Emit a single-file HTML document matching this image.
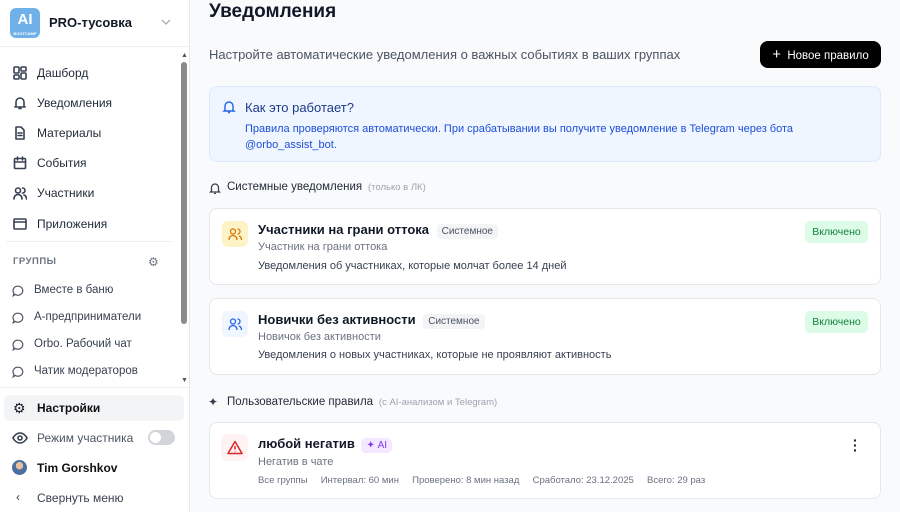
<!DOCTYPE html>
<html><head><meta charset="utf-8"><style>
*{box-sizing:border-box;margin:0;padding:0}
body{width:900px;height:512px;overflow:hidden;font-family:"Liberation Sans","Noto Sans CJK SC",sans-serif;background:#f9fafb;position:relative;color:#111827}
.a{position:absolute}
.sb{left:0;top:0;width:190px;height:512px;background:#fff;border-right:1px solid #e5e7eb}
.nav{font-size:12px;color:#1f2937}
.ic{stroke:#374151;fill:none;stroke-width:1.6;stroke-linecap:round;stroke-linejoin:round}
.grp{font-size:11.5px;color:#374151}
.card{left:209px;width:672px;background:#fff;border:1px solid #e5e7eb;border-radius:8px}
.badge{font-size:10px;color:#4b5563;background:#f3f4f6;border-radius:4px;padding:2px 5px;font-weight:normal}
.on{font-size:10.5px;color:#15803d;background:#dcfce7;border-radius:5px;padding:5px 0;width:63px;text-align:center}
.bub{position:absolute;left:12px;width:12px;height:12px}
</style></head><body>
<div class="a sb">
 <div class="a" style="left:10px;top:8px;width:30px;height:30px;border-radius:6px;background:#6fb0e8;color:#fff;font-weight:700;font-size:15px;text-align:center;line-height:24px">AI<div style="font-size:4px;line-height:4px">BOOTCAMP</div></div>
 <div class="a" style="left:49px;top:15px;font-size:13px;font-weight:700">PRO-тусовка</div>
 <svg class="a" style="left:161px;top:19px" width="10" height="7"><path d="M1 1l4 4 4-4" stroke="#9ca3af" fill="none" stroke-width="1.2"/></svg>
 <div class="a" style="left:0;top:46px;width:189px;border-top:1px solid #eef0f3"></div>
 <svg class="a ic" style="left:13px;top:66px" width="14" height="14"><rect x="1" y="1" width="5" height="6" rx="1"/><rect x="8" y="1" width="5" height="4" rx="1"/><rect x="1" y="9" width="5" height="4" rx="1"/><rect x="8" y="7" width="5" height="6" rx="1"/></svg>
 <div class="a nav" style="left:37px;top:66px">Дашборд</div>
 <svg class="a ic" style="left:13px;top:96px" width="14" height="14"><path d="M3 10V6a4 4 0 018 0v4l1 1H2zM6 12.5h2"/></svg>
 <div class="a nav" style="left:37px;top:96px">Уведомления</div>
 <svg class="a ic" style="left:13px;top:126px" width="14" height="14"><path d="M3 1h5l3 3v9H3zM5 7h4M5 9.5h4"/></svg>
 <div class="a nav" style="left:37px;top:126px">Материалы</div>
 <svg class="a ic" style="left:13px;top:156px" width="14" height="14"><rect x="1.5" y="2.5" width="11" height="10" rx="1"/><path d="M1.5 6h11M4.5 1v3M9.5 1v3"/></svg>
 <div class="a nav" style="left:37px;top:156px">События</div>
 <svg class="a ic" style="left:13px;top:186px" width="14" height="14"><circle cx="5" cy="4.5" r="2.5"/><path d="M1 13c0-3 2-4.5 4-4.5s4 1.5 4 4.5M9.5 2a2.5 2.5 0 010 5M11 9c1.5.5 2.5 2 2.5 4"/></svg>
 <div class="a nav" style="left:37px;top:186px">Участники</div>
 <svg class="a ic" style="left:13px;top:217px" width="14" height="14"><rect x="1" y="2" width="12" height="10" rx="1"/><path d="M1 5h12"/></svg>
 <div class="a nav" style="left:37px;top:217px">Приложения</div>
 <div class="a" style="left:6px;top:241px;width:166px;border-top:1px solid #eef0f3"></div>
 <div class="a" style="left:13px;top:256px;font-size:9.5px;color:#6b7280;font-weight:700;letter-spacing:.5px">ГРУППЫ</div>
 <div class="a" style="left:148px;top:255px;font-size:12px;color:#6b7280">⚙</div>
 <svg class="bub" style="top:285px" viewBox="0 0 12 12" fill="none" stroke="#4b5563" stroke-width="1.2"><path d="M6 1.2a4.8 4.5 0 11-2.6 8.3L1.2 10.8l.8-2.4A4.8 4.5 0 016 1.2z"/></svg>
 <div class="a grp" style="left:34px;top:284px">Вместе в баню</div>
 <svg class="bub" style="top:312px" viewBox="0 0 12 12" fill="none" stroke="#4b5563" stroke-width="1.2"><path d="M6 1.2a4.8 4.5 0 11-2.6 8.3L1.2 10.8l.8-2.4A4.8 4.5 0 016 1.2z"/></svg>
 <div class="a grp" style="left:34px;top:311px">А-предприниматели</div>
 <svg class="bub" style="top:339px" viewBox="0 0 12 12" fill="none" stroke="#4b5563" stroke-width="1.2"><path d="M6 1.2a4.8 4.5 0 11-2.6 8.3L1.2 10.8l.8-2.4A4.8 4.5 0 016 1.2z"/></svg>
 <div class="a grp" style="left:34px;top:338px">Orbo. Рабочий чат</div>
 <svg class="bub" style="top:366px" viewBox="0 0 12 12" fill="none" stroke="#4b5563" stroke-width="1.2"><path d="M6 1.2a4.8 4.5 0 11-2.6 8.3L1.2 10.8l.8-2.4A4.8 4.5 0 016 1.2z"/></svg>
 <div class="a grp" style="left:34px;top:365px">Чатик модераторов</div>
 <div class="a" style="left:181px;top:52px;font-size:7px;color:#555">▲</div>
 <div class="a" style="left:181px;top:62px;width:6px;height:262px;border-radius:3px;background:#8a8a8a"></div>
 <div class="a" style="left:181px;top:377px;font-size:7px;color:#555">▼</div>
 <div class="a" style="left:0;top:387px;width:189px;border-top:1px solid #eef0f3"></div>
 <div class="a" style="left:4px;top:395px;width:180px;height:26px;border-radius:6px;background:#f3f4f6"></div>
 <div class="a" style="left:13px;top:400px;font-size:14px">⚙</div>
 <div class="a nav" style="left:37px;top:401px;color:#111;font-weight:700">Настройки</div>
 <svg class="a ic" style="left:12px;top:431px" width="16" height="14"><path d="M1 7s2.5-5 7-5 7 5 7 5-2.5 5-7 5-7-5-7-5z"/><circle cx="8" cy="7" r="2"/></svg>
 <div class="a" style="left:37px;top:431px;font-size:12px;color:#4b5563">Режим участника</div>
 <div class="a" style="left:148px;top:430px;width:27px;height:15px;border-radius:8px;background:#d1d5db"><div style="margin:2px;width:11px;height:11px;border-radius:50%;background:#fff"></div></div>
 <div class="a" style="left:12px;top:460px;width:15px;height:15px;border-radius:50%;background:radial-gradient(circle at 50% 38%,#e8c0a0 30%,#4a6fa0 32%)"></div>
 <div class="a nav" style="left:37px;top:461px;color:#111;font-weight:700">Tim Gorshkov</div>
 <div class="a" style="left:16px;top:490px;font-size:12px;color:#374151">‹</div>
 <div class="a" style="left:37px;top:491px;font-size:12px;color:#374151">Свернуть меню</div>
</div>

<div class="a" style="left:209px;top:1px;font-size:19px;font-weight:700">Уведомления</div>
<div class="a" style="left:209px;top:47px;font-size:13px;color:#4b5563">Настройте автоматические уведомления о важных событиях в ваших группах</div>
<div class="a" style="left:760px;top:41px;width:121px;height:27px;border-radius:8px;background:#000;color:#fff;font-size:11.5px;line-height:27px;text-align:center;white-space:nowrap"><span style="font-size:15px">+</span>&nbsp; Новое правило</div>
<div class="a" style="left:209px;top:86px;width:672px;height:76px;border-radius:8px;background:#eff6ff;border:1px solid #dbeafe"></div>
<svg class="a" style="left:222px;top:100px" width="14" height="14" fill="none" stroke="#2563eb" stroke-width="1.4"><path d="M3 10V6a4 4 0 018 0v4l1 1H2zM6 12.5h2"/></svg>
<div class="a" style="left:245px;top:100px;font-size:13px;color:#1e3a8a">Как это работает?</div>
<div class="a" style="left:245px;top:121px;font-size:11px;color:#1d4ed8;line-height:16px;width:600px">Правила проверяются автоматически. При срабатывании вы получите уведомление в Telegram через бота @orbo_assist_bot.</div>
<svg class="a" style="left:209px;top:182px" width="12" height="12" fill="none" stroke="#374151" stroke-width="1.3"><path d="M2.5 9V5.5a3.5 3.5 0 017 0V9l1 1h-9zM5 11.5h2"/></svg>
<div class="a" style="left:227px;top:181px;font-size:11.5px;color:#1f2937">Системные уведомления <span style="font-size:9.5px;color:#9ca3af">&nbsp;(только в ЛК)</span></div>

<div class="a card" style="top:208px;height:77px"></div>
<div class="a" style="left:222px;top:221px;width:26px;height:26px;border-radius:6px;background:#fef3c7"></div>
<svg class="a" style="left:228px;top:227px" width="14" height="14" fill="none" stroke="#d97706" stroke-width="1.3"><circle cx="5" cy="4.5" r="2.5"/><path d="M1 13c0-3 2-4.5 4-4.5s4 1.5 4 4.5M9.5 2a2.5 2.5 0 010 5M11 9c1.5.5 2.5 2 2.5 4"/></svg>
<div class="a" style="left:258px;top:222px;font-size:13px;font-weight:600">Участники на грани оттока <span class="badge" style="margin-left:4px">Системное</span></div>
<div class="a" style="left:258px;top:241px;font-size:11px;color:#6b7280">Участник на грани оттока</div>
<div class="a" style="left:258px;top:260px;font-size:11px;color:#374151">Уведомления об участниках, которые молчат более 14 дней</div>
<div class="a on" style="left:805px;top:221px">Включено</div>

<div class="a card" style="top:298px;height:77px"></div>
<div class="a" style="left:222px;top:311px;width:26px;height:26px;border-radius:6px;background:#eff6ff"></div>
<svg class="a" style="left:228px;top:317px" width="14" height="14" fill="none" stroke="#2563eb" stroke-width="1.3"><circle cx="5" cy="4.5" r="2.5"/><path d="M1 13c0-3 2-4.5 4-4.5s4 1.5 4 4.5M9.5 2a2.5 2.5 0 010 5M11 9c1.5.5 2.5 2 2.5 4"/></svg>
<div class="a" style="left:258px;top:312px;font-size:13px;font-weight:600">Новички без активности <span class="badge" style="margin-left:4px">Системное</span></div>
<div class="a" style="left:258px;top:331px;font-size:11px;color:#6b7280">Новичок без активности</div>
<div class="a" style="left:258px;top:349px;font-size:11px;color:#374151">Уведомления о новых участниках, которые не проявляют активность</div>
<div class="a on" style="left:805px;top:311px">Включено</div>

<div class="a" style="left:208px;top:395px;font-size:12px;color:#374151">✦</div>
<div class="a" style="left:227px;top:396px;font-size:11.5px;color:#1f2937">Пользовательские правила <span style="font-size:9.5px;color:#9ca3af">&nbsp;(с AI-анализом и Telegram)</span></div>

<div class="a card" style="top:422px;height:77px"></div>
<div class="a" style="left:221px;top:434px;width:27px;height:27px;border-radius:6px;background:#fef2f2"></div>
<svg class="a" style="left:227px;top:440px" width="16" height="15" fill="none" stroke="#dc2626" stroke-width="1.5" stroke-linejoin="round"><path d="M8 1.5L15 13.5H1z M8 6v3.5M8 11.3v.4"/></svg>
<div class="a" style="left:258px;top:436px;font-size:13px;font-weight:600">любой негатив <span style="font-size:10px;color:#7c3aed;background:#f3e8ff;border-radius:5px;padding:2px 5px;margin-left:3px;font-weight:normal">✦ AI</span></div>
<div class="a" style="left:258px;top:456px;font-size:11px;color:#6b7280">Негатив в чате</div>
<div class="a" style="left:258px;top:475px;font-size:9.5px;color:#6b7280">Все группы&nbsp;&nbsp;&nbsp;&nbsp; Интервал: 60 мин&nbsp;&nbsp;&nbsp;&nbsp; Проверено: 8 мин назад&nbsp;&nbsp;&nbsp;&nbsp; Сработало: 23.12.2025&nbsp;&nbsp;&nbsp;&nbsp; Всего: 29 раз</div>
<div class="a" style="left:853px;top:438px;font-size:14px;font-weight:700;line-height:5px">·<br>·<br>·</div>
</body></html>
